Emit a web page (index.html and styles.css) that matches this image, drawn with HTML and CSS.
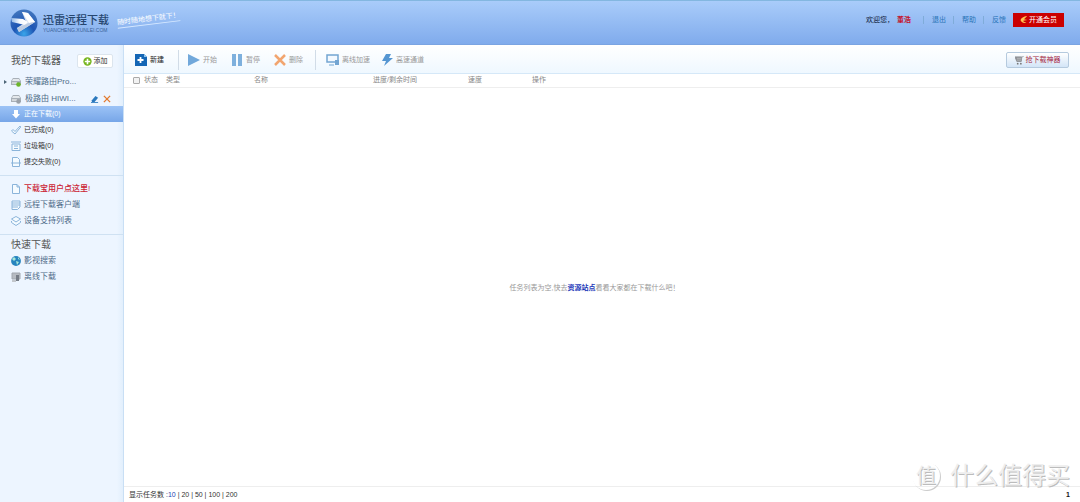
FILE: index.html
```html
<!DOCTYPE html>
<html lang="zh-CN">
<head>
<meta charset="utf-8">
<title>迅雷远程下载</title>
<link rel="stylesheet" href="styles.css">
</head>
<body>
<header class="header">
  <svg class="logo" viewBox="0 0 28 28" aria-hidden="true">
    <defs>
      <radialGradient id="ball" cx=".5" cy=".9" r=".85"><stop offset="0" stop-color="#3aa5ea"/><stop offset=".45" stop-color="#1e55b4"/><stop offset="1" stop-color="#3f74bd"/></radialGradient>
      <linearGradient id="wing" x1="0" y1="0" x2="1" y2="0"><stop offset="0" stop-color="#8fb6e6"/><stop offset=".5" stop-color="#f4f8fd"/><stop offset="1" stop-color="#fff"/></linearGradient>
    </defs>
    <circle cx="14" cy="14" r="13.500" fill="url(#ball)"/>
    <path d="M12 3l6 1 7 9-16 10-2-4 9-6z" fill="#d3dff0"/>
    <path d="M12 3l6 1 7 9-6 1z" fill="#fff"/>
    <path d="M1 9l12 1 5 3-3 3-13-3z" fill="url(#wing)"/>
    <path d="M19 14l6-1-16 10-2-4z" fill="#bccbe1"/>
  </svg>
  <div class="brand"><h1>迅雷远程下载</h1><span class="domain">YUANCHENG.XUNLEI.COM</span></div>
  <div class="slogan">随时随地想下就下！</div>
  <nav class="account">
    <span class="welcome">欢迎您，</span><a class="user" href="#">董浩</a>
    <a class="account-link" href="#">退出</a><a class="account-link" href="#">帮助</a><a class="account-link" href="#">反馈</a>
    <a class="vip" href="#"><svg class="icon-small" viewBox="0 0 10 10"><path d="M9 0C3 1 0 4 1 6s4 4 7 2C5 8 4 7 4 6l5-1-4-1z" fill="#ffc34d"/></svg>开通会员</a>
  </nav>
</header>
<div class="body">
  <aside class="sidebar">
    <div class="side-head"><h2>我的下载器</h2><button class="add"><svg class="icon-add" viewBox="0 0 10 10"><circle cx="5" cy="5" r="4.600" fill="#75b51d"/><path d="M5 2v6M2 5h6" stroke="#fff" stroke-width="1.800"/></svg>添加</button></div>
    <ul class="devices">
      <li><span class="caret"></span><svg class="icon" viewBox="0 0 10 10"><path d="M2 1h6l2 3v4H0V4z" fill="#a9b0b8"/><path d="M2 2h6l1 2H1z" fill="#e4e8ec"/><path d="M1 6h5" stroke="#fff"/><circle cx="7.500" cy="7.500" r="2.300" fill="#6cb52a"/></svg><a href="#">荣耀路由Pro...</a></li>
      <li><span class="caret hidden"></span><svg class="icon" viewBox="0 0 10 10"><path d="M2 1h6l2 3v4H0V4z" fill="#a9b0b8"/><path d="M2 2h6l1 2H1z" fill="#e4e8ec"/><path d="M1 6h5" stroke="#fff"/><circle cx="7.500" cy="7.500" r="2.300" fill="#9aa0a8"/></svg><a href="#">极路由 HIWI...</a>
        <span class="tools"><button aria-label="编辑"><svg class="icon-tool" viewBox="0 0 9 9"><path d="M1 6l4-5 3 2-4 5H1z" fill="#2b78bd"/><path d="M0 8.500h8" stroke="#2b78bd"/></svg></button><button aria-label="移除"><svg class="icon-tool" viewBox="0 0 9 9"><path d="M1 1l7 7M8 1L1 8" stroke="#e27a2e" stroke-width="1.500"/></svg></button></span></li>
    </ul>
    <ul class="states">
      <li class="active"><svg class="icon" viewBox="0 0 10 10"><path d="M3 1h4v4h2L5 9.500 1 5h2z" fill="#fff"/></svg><a href="#">正在下载(0)</a></li>
      <li><svg class="icon line" viewBox="0 0 10 10"><path d="M.5 6L2 4.500l2 2L9 1l.7 1L4 9z"/></svg><a href="#">已完成(0)</a></li>
      <li><svg class="icon line" viewBox="0 0 10 10"><path d="M1 3h8v6.500H1zM0 1h10M3 5h4M3 7.500h4"/></svg><a href="#">垃圾箱(0)</a></li>
      <li><svg class="icon line" viewBox="0 0 10 10"><path d="M1.500.5h5l2 2v7h-7zM0 6h10"/></svg><a href="#">提交失败(0)</a></li>
    </ul>
    <ul class="links">
      <li class="hot"><svg class="icon line" viewBox="0 0 10 10"><path d="M1.500.5h4.500l2.500 2.500v6.500h-7zM6 .5V3h2.500"/></svg><a href="#">下载宝用户点这里!</a></li>
      <li><svg class="icon line" viewBox="0 0 10 10"><path d="M1 1h8v6L6.500 9.500H1zM1 3h8M1 5h8M1 7h6"/></svg><a href="#">远程下载客户端</a></li>
      <li><svg class="icon line" viewBox="0 0 10 10"><path d="M5 .5L9.500 3 5 6 .5 3zM.5 5v1.500L5 9.500l4.500-3V5"/></svg><a href="#">设备支持列表</a></li>
    </ul>
    <div class="quick">
      <h2>快速下载</h2>
      <ul class="links plain">
        <li><svg class="icon" viewBox="0 0 10 10"><circle cx="5" cy="5" r="4.900" fill="#2684bf"/><path d="M1 3l2-2 2 2-2 2zM5 5l3 1-2 3zM7 1l2 3-2-1z" fill="#a5e6d8"/></svg><a href="#">影视搜索</a></li>
        <li><svg class="icon" viewBox="0 0 10 10"><path d="M1 1h8v6H1z" fill="#b6bbc2" stroke="#a0a6ae"/><path d="M5 3h3v6H5z" fill="#757c86"/><path d="M1 9h4" stroke="#999"/></svg><a href="#">离线下载</a></li>
      </ul>
    </div>
  </aside>
  <main class="main">
    <div class="toolbar">
      <button class="tool new"><svg viewBox="0 0 14 14"><path d="M1 1h9l3 3v9H1z" fill="#1466b5"/><path d="M10 1v3h3z" fill="#8ec5ee"/><path d="M6.500 4v6M3.500 7h6" stroke="#fff" stroke-width="1.800"/></svg>新建</button>
      <div class="group">
        <button class="tool start"><svg viewBox="0 0 14 14"><path d="M1 1l12 6-12 6z" fill="#71a8db"/></svg>开始</button>
        <button class="tool pause"><svg viewBox="0 0 14 14"><path d="M2 1h4v12H2zM8 1h4v12H8z" fill="#7eb0dd"/></svg>暂停</button>
        <button class="tool"><svg viewBox="0 0 14 14"><path d="M2 2l10 10M12 2L2 12" stroke="#f2a56f" stroke-width="2.500"/></svg>删除</button>
      </div>
      <div class="group second">
        <button class="tool offline"><svg viewBox="0 0 14 14"><path d="M1 2h11v7H1z" fill="#f3f9ff" stroke="#73a5d2" stroke-width="1.500"/><path d="M3 12h5" stroke="#73a5d2"/><path d="M9 7h4v5H9z" fill="#73a5d2"/></svg>离线加速</button>
        <button class="tool"><svg viewBox="0 0 14 14"><path d="M6 1h5L9 5h4L4 13l2-5H2z" fill="#5596d2"/></svg>高速通道</button>
      </div>
      <button class="promo"><svg viewBox="0 0 10 10"><path d="M0 1h7.500L7 6H2zM8 1l1.500-.5" fill="#8c8f94" stroke="#8c8f94"/><path d="M2 2.500h5M2 4.500h5" stroke="#ddd" stroke-width=".6"/><circle cx="3" cy="8.500" r="1" fill="#777"/><circle cx="6.500" cy="8.500" r="1" fill="#777"/></svg>抢下载神器</button>
    </div>
    <table class="tasks">
      <colgroup><col class="c-check"><col class="c-state"><col class="c-type"><col class="c-name"><col class="c-progress"><col class="c-speed"><col></colgroup>
      <thead><tr><th><input type="checkbox" aria-label="全选"></th><th>状态</th><th>类型</th><th>名称</th><th>进度/剩余时间</th><th>速度</th><th>操作</th></tr></thead>
    </table>
    <p class="empty">任务列表为空,快去<a href="#">资源站点</a>看看大家都在下载什么吧！</p>
    <footer class="footer"><span>显示任务数 :<a href="#">10</a> | 20 | 50 | 100 | 200</span><b>1</b></footer>
  </main>
</div>
<div class="watermark"><span class="seal">值</span><span>什么值得买</span></div>
</body>
</html>
```

FILE: styles.css
```css
* { box-sizing: border-box; }
body { margin: 0; min-height: 100vh; display: flex; flex-direction: column; position: relative; background: #fff; color: #444; font: 7px/16px "Liberation Sans", "Noto Sans CJK SC", sans-serif; }
h1, h2, p, ul { margin: 0; padding: 0; }
ul { list-style: none; }
a { color: inherit; text-decoration: none; }
button { display: inline-flex; align-items: center; padding: 0; border: 0; background: none; color: inherit; font: inherit; white-space: nowrap; }
svg { display: block; flex: none; }

.header { height: 45px; display: flex; align-items: center; padding: 0 16px 0 10px; background: linear-gradient(#a9ccfa, #80abec); border-top: 1px solid #83b7e0; border-bottom: 1px solid #7aa4e2; }
.logo { width: 28px; height: 28px; }
.brand { margin: 2px 0 0 5px; color: #26466f; }
.brand h1 { font-size: 11px; line-height: 13px; font-weight: 500; }
.domain { display: block; font-size: 5px; line-height: 7px; color: #3a6299; }
.slogan { margin: -6px 0 0 8px; font-size: 7px; line-height: 10px; color: #fff; border-bottom: 1px solid #d6e8ff; transform: rotate(-7deg); }
.account { display: flex; align-items: center; margin: -6px 0 0 auto; }
.welcome { color: #10213b; }
.user { width: 26px; margin-left: 3px; font-weight: bold; color: #c4122b; }
.account-link { width: 30px; padding-left: 8px; line-height: 8px; color: #2974b8; border-left: 1px solid #7facd9; }
.vip { display: flex; align-items: center; justify-content: center; gap: 1px; width: 51px; height: 14px; background: #cb0000; color: #fff; }
.icon-small { width: 8px; height: 8px; }

.body { flex: 1; display: flex; }
.sidebar { width: 124px; flex: none; background: linear-gradient(90deg, #edf5ff 95%, #e2effc); border-right: 1px solid #c9dff5; color: #4d6a87; font-size: 8px; }
.sidebar h2 { font-size: 10px; line-height: 16px; font-weight: 400; color: #555; }
.side-head { display: flex; justify-content: space-between; align-items: center; padding: 8px 10px 5px 11px; }
.add { justify-content: center; gap: 2px; width: 36px; height: 14px; background: #fff; border: 1px solid #dce5ee; border-radius: 2px; font-size: 7px; color: #333; }
.icon-add { width: 9px; height: 9px; }
.icon { width: 10px; height: 10px; }
.line path { fill: #f5fbff; stroke: #8bb4da; stroke-width: 1px; }
.devices li { display: flex; align-items: center; height: 16px; padding: 0 12px 0 4px; }
.devices li + li { margin-top: 2px; height: 14px; }
.devices a { margin-left: 4px; }
.caret { width: 3px; margin-right: 4px; border: 2px solid transparent; border-left: 3px solid #4d6577; border-right: 0; }
.caret.hidden { visibility: hidden; }
.tools { display: flex; gap: 4px; margin-left: auto; }
.icon-tool { width: 8px; height: 8px; }
.states { padding-bottom: 5px; font-size: 7px; color: #333; }
.states li, .links li { display: flex; align-items: center; gap: 3px; height: 16px; padding-left: 11px; }
.states .active { color: #fff; background: linear-gradient(#9cc3f6, #77a6e8); }
.links { padding: 5px 0; border-top: 1px solid #cfe1f2; }
.links .hot { color: #cb1d34; font-weight: 500; }
.quick { border-top: 1px solid #cfe1f2; }
.quick h2 { padding: 2px 0 0 11px; }
.plain { padding: 0; border: 0; }

.main { flex: 1; min-width: 0; display: flex; flex-direction: column; }
.toolbar { height: 29px; display: flex; align-items: center; padding: 2px 11px 0 10px; border-bottom: 1px solid #d5e8f8; background: linear-gradient(#fff, #eff8ff); color: #999; }
.tool { gap: 2px; }
.tool svg { width: 14px; height: 14px; }
.new { width: 44px; color: #222; }
.group { display: flex; align-items: center; height: 20px; padding-left: 8px; border-left: 1px solid #d1dce7; }
.start, .pause { width: 43px; }
.second { margin-left: 12px; padding-left: 10px; }
.offline { width: 54px; }
.promo { margin-left: auto; justify-content: center; gap: 2px; width: 63px; height: 16px; border: 1px solid #b5cade; border-radius: 2px; background: linear-gradient(#fff, #d3e5f7); color: #a52745; }
.promo svg { width: 9px; height: 9px; }
.tasks { width: 100%; table-layout: fixed; border-collapse: collapse; color: #888; border-bottom: 1px solid #eee; }
.tasks th { height: 13px; padding: 0; font-weight: 400; line-height: 12px; text-align: left; white-space: nowrap; }
.tasks input { appearance: none; display: block; width: 7px; height: 7px; margin: 0 0 0 9px; border: 1px solid #aaa; border-radius: 1px; background: #f2f2f2; }
.c-check { width: 20px; }
.c-state { width: 22px; }
.c-type { width: 88px; }
.c-name { width: 119px; }
.c-progress { width: 95px; }
.c-speed { width: 64px; }
.empty { flex: 1; display: flex; align-items: center; justify-content: center; padding: 2px 15px 0 0; color: #999; }
.empty a { color: #1a36b8; font-weight: bold; }
.footer { display: flex; justify-content: space-between; height: 16px; padding: 0 10px 0 5px; border-top: 1px solid #eee; color: #333; }
.footer a { color: #1c3faf; }
.footer b { color: #111; }
.watermark { position: absolute; right: 10px; bottom: 10px; display: flex; align-items: center; gap: 10px; font-size: 24px; line-height: 32px; color: #eee; text-shadow: 1px 1px 0 #bcbcbc; pointer-events: none; }
.seal { width: 28px; height: 28px; border-radius: 50%; box-shadow: 1px 1px 0 #ccc; font-size: 20px; line-height: 28px; text-align: center; }
```
